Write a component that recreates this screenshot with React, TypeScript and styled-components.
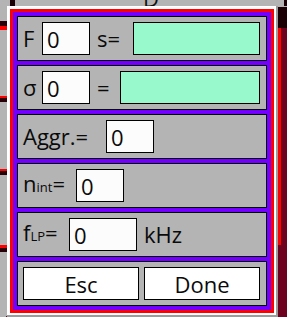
import React from "react";
import styled, { createGlobalStyle } from "styled-components";

const Global = createGlobalStyle`
  html, body { margin: 0; padding: 0; background: #b4b4b4; }
  body { font-family: "Open Sans", "Noto Sans", sans-serif; }
`;

const Page = styled.div`
  position: relative;
  width: 287px;
  height: 317px;
  overflow: hidden;
  background: #b4b4b4;
`;

/* background application behind the dialog (free canvas) */
const Stripe = styled.div<{ $x: number; $y: number; $w: number; $h: number; $c: string }>`
  position: absolute;
  left: ${(p) => p.$x}px;
  top: ${(p) => p.$y}px;
  width: ${(p) => p.$w}px;
  height: ${(p) => p.$h}px;
  background: ${(p) => p.$c};
`;

const BgText = styled.div`
  position: absolute;
  left: 143px;
  top: -17px;
  font-size: 22px;
  color: #111;
`;

const Dialog = styled.div`
  position: absolute;
  left: 7px;
  top: 6px;
  width: 271px;
  box-sizing: border-box;
  background: #ffffff;
  padding: 3px 2px 2px 3px;
  border-right: 2px solid #9c9c9c;
  border-bottom: 2px solid #9c9c9c;
`;

const RedFrame = styled.div`
  border: 3px solid #ff0000;
  background: #7300ff;
  padding: 4px;
  display: flex;
  flex-direction: column;
  gap: 4px;
`;

const Panel = styled.div`
  height: 45px;
  box-sizing: border-box;
  border: 1px solid #000;
  background: #b4b4b4;
  padding: 5px 6px 5px 5px;
  display: flex;
  align-items: center;
`;

const Label = styled.div<{ $w?: number; $ml?: number }>`
  ${(p) => (p.$w ? `width: ${p.$w}px;` : "")}
  ${(p) => (p.$ml ? `margin-left: ${p.$ml}px;` : "")}
  flex: none;
  font-size: 22px;
  line-height: 33px;
  color: #0a0a0a;
  white-space: nowrap;
`;

const Sub = styled.span`
  font-size: 13px;
`;

const Field = styled.input<{ $w: number }>`
  width: ${(p) => p.$w}px;
  height: 33px;
  box-sizing: border-box;
  flex: none;
  border: 1px solid #000;
  background: #fcfcfc;
  margin: 0;
  padding: 0 0 0 4px;
  font-family: "Open Sans", "Noto Sans", sans-serif;
  font-size: 22px;
  color: #0a0a0a;
  outline: none;
`;

const Result = styled.div`
  flex: 1;
  height: 33px;
  box-sizing: border-box;
  border: 1px solid #000;
  background: #98f9cc;
`;

const ButtonRow = styled.div`
  flex: 1;
  display: grid;
  grid-template-columns: 1fr 1fr;
  gap: 5px;
`;

const Button = styled.button`
  height: 33px;
  box-sizing: border-box;
  border: 1px solid #000;
  background: #ffffff;
  margin: 0;
  padding: 0;
  font-family: "Open Sans", "Noto Sans", sans-serif;
  font-size: 22px;
  color: #0a0a0a;
`;

export default function App() {
  return (
    <Page>
      <Global />
      <Stripe $x={10} $y={0} $w={5} $h={6} $c="#1a0005" />
      <Stripe $x={284} $y={0} $w={3} $h={6} $c="#1a0005" />
      <BgText>D</BgText>
      <Stripe $x={0} $y={21} $w={7} $h={5} $c="#2a0008" />
      <Stripe $x={0} $y={26} $w={7} $h={4} $c="#ff0000" />
      <Stripe $x={0} $y={96} $w={7} $h={2} $c="#ff0000" />
      <Stripe $x={0} $y={98} $w={7} $h={4} $c="#2a0008" />
      <Stripe $x={0} $y={169} $w={7} $h={2} $c="#ff0000" />
      <Stripe $x={0} $y={171} $w={7} $h={4} $c="#2a0008" />
      <Stripe $x={0} $y={245} $w={7} $h={3} $c="#ff0000" />
      <Stripe $x={0} $y={248} $w={7} $h={4} $c="#2a0008" />
      <Stripe $x={6} $y={316} $w={14} $h={1} $c="#6e0020" />
      <Stripe $x={276} $y={7} $w={11} $h={310} $c="#6e0020" />
      <Stripe $x={276} $y={7} $w={11} $h={21} $c="#1a0005" />
      <Stripe $x={278} $y={28} $w={3} $h={217} $c="#ff0000" />

      <Dialog>
        <RedFrame>
          <Panel>
            <Label $w={19}>F</Label>
            <Field $w={48} defaultValue="0" readOnly />
            <Label $ml={7} $w={36}>s=</Label>
            <Result />
          </Panel>
          <Panel>
            <Label $w={19}>σ</Label>
            <Field $w={48} defaultValue="0" readOnly />
            <Label $ml={7} $w={23}>=</Label>
            <Result />
          </Panel>
          <Panel>
            <Label $w={83}>Aggr.=</Label>
            <Field $w={48} defaultValue="0" readOnly />
          </Panel>
          <Panel>
            <Label $w={53}>
              n<Sub>int</Sub>=
            </Label>
            <Field $w={48} defaultValue="0" readOnly />
          </Panel>
          <Panel>
            <Label $w={46}>
              f<Sub>LP</Sub>=
            </Label>
            <Field $w={68} defaultValue="0" readOnly />
            <Label $ml={7}>kHz</Label>
          </Panel>
          <Panel>
            <ButtonRow>
              <Button>Esc</Button>
              <Button>Done</Button>
            </ButtonRow>
          </Panel>
        </RedFrame>
      </Dialog>
    </Page>
  );
}
